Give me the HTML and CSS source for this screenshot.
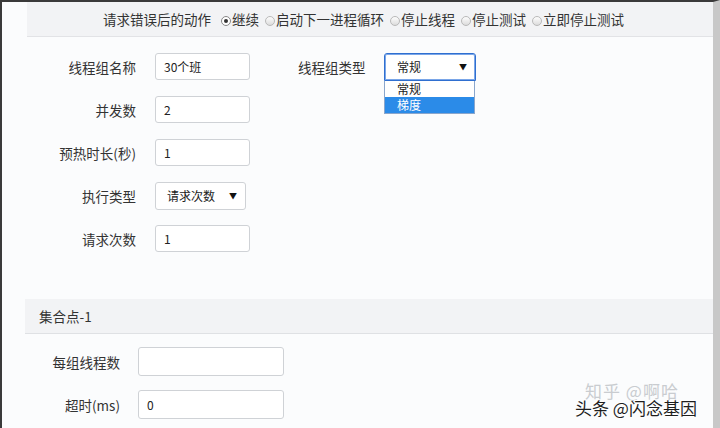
FILE: index.html
```html
<!DOCTYPE html>
<html lang="zh-CN">
<head>
<meta charset="utf-8">
<link rel="stylesheet" href="styles.css">
</head>
<body>
<div class="frame">
  <div class="topbar">
    <span class="tlabel">请求错误后的动作</span>
    <span class="radio checked"></span><span class="opt">继续</span>
    <span class="radio"></span><span class="opt">启动下一进程循环</span>
    <span class="radio"></span><span class="opt">停止线程</span>
    <span class="radio"></span><span class="opt">停止测试</span>
    <span class="radio"></span><span class="opt">立即停止测试</span>
  </div>

  <div class="form">
    <div class="col">
      <div class="row"><span class="label">线程组名称</span><div class="input">30个班</div></div>
      <div class="row"><span class="label">并发数</span><div class="input">2</div></div>
      <div class="row"><span class="label">预热时长(秒)</span><div class="input">1</div></div>
      <div class="row"><span class="label">执行类型</span><div class="select narrow"><span>请求次数</span><span class="arrow">▼</span></div></div>
      <div class="row"><span class="label">请求次数</span><div class="input">1</div></div>
    </div>
    <div class="col2">
      <div class="row"><span class="label2">线程组类型</span>
        <div class="selwrap">
          <div class="select focus"><span>常规</span><span class="arrow">▼</span></div>
          <div class="dropdown">
            <div class="option">常规</div>
            <div class="option active">梯度</div>
          </div>
        </div>
      </div>
    </div>
  </div>

  <div class="section">集合点-1</div>
  <div class="form2">
    <div class="row2"><span class="label3">每组线程数</span><div class="input wide"></div></div>
    <div class="row2"><span class="label3">超时(ms)</span><div class="input wide">0</div></div>
  </div>

  <div class="wm1">知乎 @啊哈</div>
  <div class="wm2">头条 @闪念基因</div>
</div>
</body>
</html>
```

FILE: styles.css
```css
* { box-sizing: border-box; }
html, body { margin: 0; padding: 0; }
body {
  width: 720px;
  height: 428px;
  overflow: hidden;
  background: #fbfcfd;
  font-family: "Noto Sans CJK SC", "Noto Sans", sans-serif;
  color: #333;
}
.frame {
  position: relative;
  width: 720px;
  height: 428px;
  border-top: 2px solid #3a3a3a;
  border-left: 2px solid #3a3a3a;
  border-right: 7px solid #c8c8c8;
  background: #fbfcfd;
}
.topbar {
  margin-left: 25px;
  height: 35px;
  background: #f2f3f5;
  border-bottom: 1px solid #e2e3e6;
  display: flex;
  align-items: center;
  padding-left: 76px;
  font-size: 13.5px;
  color: #333;
}
.tlabel { margin-right: 10px; }
.opt { margin-right: 6px; }
.radio {
  width: 10px;
  height: 10px;
  border-radius: 50%;
  border: 1px solid #b9b9b9;
  background: linear-gradient(#fdfdfd, #dcdcdc);
  margin-right: 1px;
  margin-top: 4px;
  position: relative;
}
.radio.checked { border-color: #888; background: #fff; }
.radio.checked::after {
  content: "";
  position: absolute;
  left: 2px; top: 2px;
  width: 4px; height: 4px;
  border-radius: 50%;
  background: #333;
}
.form {
  display: flex;
  padding-top: 16px;
  height: 262px;
}
.col { display: flex; flex-direction: column; gap: 16px; }
.row { display: flex; align-items: center; height: 27px; }
.label {
  width: 134px;
  text-align: right;
  margin-right: 19px;
  font-size: 13.5px;
}
.input {
  width: 95px;
  height: 27px;
  border: 1px solid #cfd2d6;
  border-radius: 3px;
  background: #fff;
  font-size: 12px;
  padding-left: 8px;
  display: flex;
  align-items: center;
  color: #222;
}
.select {
  width: 92px;
  height: 28px;
  border: 1px solid #cfd2d6;
  border-radius: 3px;
  background: #fff;
  font-size: 12px;
  padding: 0 8px 0 12px;
  display: flex;
  align-items: center;
  justify-content: space-between;
  color: #222;
}
.select.narrow { width: 91px; padding-left: 11px; }
.arrow { font-size: 8px; color: #111; }
.select.focus { border: 1px solid #2f6fd0; border-radius: 3px 3px 0 0; box-shadow: 0 0 0 1px #7aa6e8 inset; }
.col2 { margin-left: 48px; }
.label2 { width: 69px; margin-right: 17px; font-size: 13.5px; }
.selwrap { position: relative; width: 92px; }
.dropdown {
  position: absolute;
  left: 0; top: 28px;
  width: 91px;
  border: 1px solid #8aa6cc;
  border-top: none;
  background: #fff;
  font-size: 12px;
}
.option { height: 16px; line-height: 16px; padding-left: 12px; color: #222; }
.option.active { background: #2b8be8; color: #fff; }
.section {
  margin-left: 23px;
  height: 35px;
  background: #f2f3f5;
  border-bottom: 1px solid #dfe1e4;
  font-size: 13.5px;
  padding-left: 14px;
  display: flex;
  align-items: center;
  color: #333;
}
.form2 { padding-top: 13px; display: flex; flex-direction: column; gap: 14px; }
.row2 { display: flex; align-items: center; height: 29px; }
.label3 { width: 118px; text-align: right; margin-right: 18px; font-size: 13.5px; }
.input.wide { width: 146px; height: 29px; }
.wm1 {
  position: absolute;
  left: 583px; top: 376px;
  font-size: 17px;
  color: #c9ccd0;
  letter-spacing: 1px;
}
.wm2 {
  position: absolute;
  left: 573px; top: 393px;
  font-size: 17px;
  color: #1e1e1e;
  text-shadow: 1px 1px 0 #fff, -1px -1px 0 #fff;
}
```
